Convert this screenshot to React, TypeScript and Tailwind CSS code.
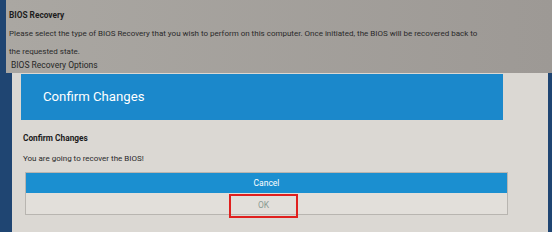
export default function App() {
  return (
    <div
      className="w-[552px] h-[232px] overflow-hidden bg-[#1f4572] flex flex-col"
      style={{ fontFamily: "Roboto, 'Liberation Sans', sans-serif" }}
    >
      {/* top gray section */}
      <div className="ml-[6px] h-[73px] bg-gradient-to-r from-[#aaa7a2] to-[#9d9995] pl-[3px] pt-[9px] text-[#1d1d1d]">
        <div className="text-[8.3px] font-bold leading-[12px]">BIOS Recovery</div>
        <div className="mt-[4px] text-[8px] leading-[18px] text-[#2a2a2a]">
          Please select the type of BIOS Recovery that you wish to perform on this computer. Once initiated, the BIOS will be recovered back to
          <br />
          the requested state.
        </div>
        <div className="pl-[2px] mt-[-2px] text-[8.5px] leading-[12px] text-[#262626]">BIOS Recovery Options</div>
      </div>

      {/* dialog */}
      <div className="ml-[12px] mr-[4px] flex-1 bg-[#dbd8d3] pt-px pl-[9px] pr-[45px]">
        <div className="h-[46px] bg-[#1b88cb] flex items-center pl-[22px] text-white text-[13.2px]">
          Confirm Changes
        </div>
        <div className="pl-[2px] pt-[12px] text-[8.3px] font-bold leading-[12px] text-[#1a1a1a]">Confirm Changes</div>
        <div className="pl-[2px] pt-[9px] text-[8px] leading-[12px] text-[#2a2a2a]">You are going to recover the BIOS!</div>
        <div className="ml-[4px] mr-[-5px] mt-[7px] border border-[#b8b5b0]">
          <div className="h-[20px] bg-[#1b8fd0] flex items-center justify-center text-white text-[8.5px]">Cancel</div>
          <div className="h-[21px] bg-[#e2dfda] flex items-center justify-center pr-[6px]">
            <div className="w-[69px] h-[24px] mt-[4px] border-2 border-[#e0201e] flex items-center justify-center text-[8.5px] text-[#8c9c92]">
              OK
            </div>
          </div>
        </div>
      </div>
    </div>
  )
}
